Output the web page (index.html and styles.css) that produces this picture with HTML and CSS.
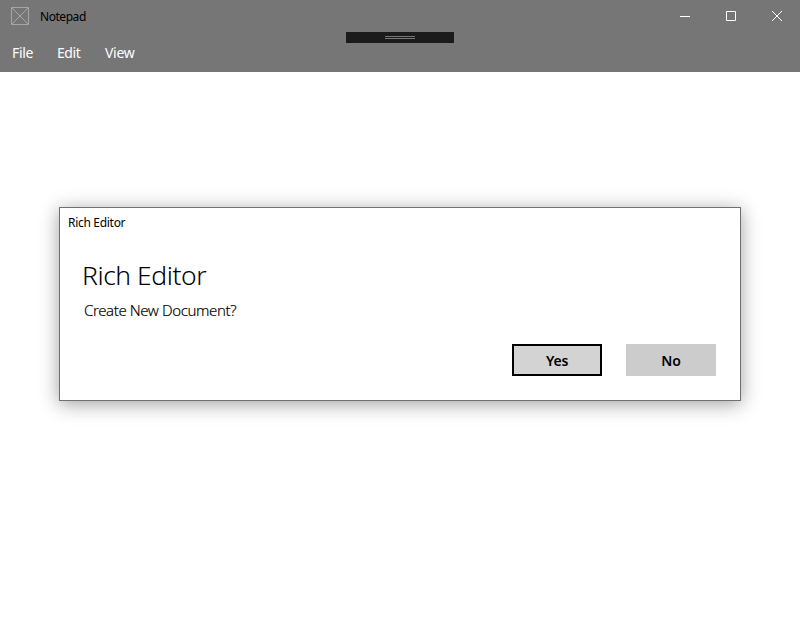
FILE: index.html
```html
<!DOCTYPE html>
<html lang="en">
<head>
<meta charset="utf-8">
<title>Notepad</title>
<link rel="stylesheet" href="styles.css">
</head>
<body>
<header class="top">
  <div class="titlebar">
    <svg class="app-icon" width="18" height="18" viewBox="0 0 18 18"><path d="M.5.5h17v17H.5zM1 1l16 16M17 1L1 17"/></svg>
    <span class="app-name">Notepad</span>
    <div class="controls">
      <svg width="46" height="32" viewBox="0 0 46 32"><path d="M18 16.5h10"/></svg>
      <svg width="46" height="32" viewBox="0 0 46 32"><path d="M18.500 11.500h9v9h-9z"/></svg>
      <svg width="46" height="32" viewBox="0 0 46 32"><path d="M18 11l10 10M28 11L18 21"/></svg>
    </div>
  </div>
  <nav class="menu"><span class="file">File</span><span class="edit">Edit</span><span class="view">View</span></nav>
  <div class="handle"><i></i></div>
</header>
<main class="page">
  <section class="dialog">
    <div class="caption">Rich Editor</div>
    <h1>Rich Editor</h1>
    <p>Create New Document?</p>
    <div class="actions"><button class="yes">Yes</button><button>No</button></div>
  </section>
</main>
</body>
</html>
```
FILE: styles.css
```css
* { box-sizing: border-box; }
body { margin: 0; height: 632px; overflow: hidden; background: #fff; font-family: "Noto Sans", "Open Sans", sans-serif; color: #000; }
.top { position: relative; height: 72px; background: #767676; }
.titlebar { display: flex; align-items: center; height: 32px; padding-left: 11px; }
.app-icon { fill: none; stroke: #a6a6a6; stroke-width: 1; }
.app-name { margin-left: 11px; font-size: 12px; line-height: 16px; letter-spacing: -.45px; padding-top: 1px; }
.controls { display: flex; margin-left: auto; }
.controls svg { fill: none; stroke: #fff; stroke-width: 1; }
.menu { display: flex; gap: 24px; padding: 11px 12px 0; font-size: 14px; line-height: 20px; color: #fff; }
.file { width: 21px; letter-spacing: -.3px; }
.edit { width: 24px; letter-spacing: -.45px; }
.view { letter-spacing: -.3px; }
.handle { position: absolute; left: 346px; top: 32px; width: 108px; height: 11px; padding: 4px 39px; background: #1b1b1b; }
.handle i { display: block; height: 3px; border: solid #767676; border-width: 1px 0; }
.page { padding: 135px 59px 0; }
.dialog { height: 194px; border: 1px solid #707070; background: #fff; box-shadow: 0 3px 18px rgba(0,0,0,.38); }
.caption { height: 30px; padding: 7px 8px; font-size: 12px; line-height: 16px; letter-spacing: -.3px; }
h1 { margin: 19px 0 0 22px; font-size: 26.500px; line-height: 36px; font-weight: 300; letter-spacing: -.45px; }
p { margin: 7px 0 0 24px; font-size: 15px; line-height: 20px; font-weight: 300; letter-spacing: -.4px; -webkit-text-stroke: .15px #000; }
.actions { display: flex; justify-content: flex-end; gap: 24px; margin: 24px 24px 0 0; }
button { width: 90px; height: 32px; padding: 1px 0 0; border: 0; background: #ccc; font: 600 14px/20px "Noto Sans", "Open Sans", sans-serif; letter-spacing: -.2px; color: #000; }
.yes { border: 2px solid #000; background: #d3d3d3; }
```
